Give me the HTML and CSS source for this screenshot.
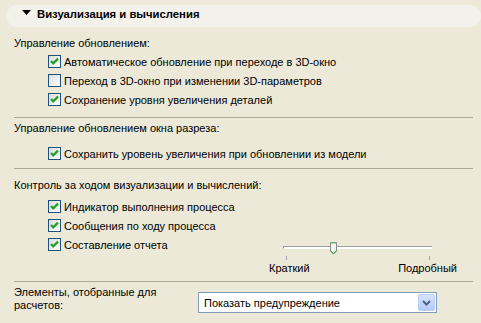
FILE: index.html
```html
<!DOCTYPE html>
<html lang="ru">
<head>
  <meta charset="UTF-8">
  <title>Визуализация и вычисления</title>
  <link rel="stylesheet" href="styles.css">
</head>
<body>

  <div class="header">
    <svg class="arrow" width="9" height="5" viewBox="0 0 9 5"><polygon points="0,0 9,0 4.5,5" fill="#000"/></svg>
    <span>Визуализация и вычисления</span>
  </div>

  <div class="section s1">
    <div class="title">Управление обновлением:</div>
    <div class="row"><span class="box"><svg width="11" height="11" viewBox="0 0 11 11"><path d="M2 5 L4.2 7.4 L9 2.6" fill="none" stroke="#21a121" stroke-width="2.2"/></svg></span><span class="txt">Автоматическое обновление при переходе в 3D-окно</span></div>
    <div class="row"><span class="box"></span><span class="txt">Переход в 3D-окно при изменении 3D-параметров</span></div>
    <div class="row"><span class="box"><svg width="11" height="11" viewBox="0 0 11 11"><path d="M2 5 L4.2 7.4 L9 2.6" fill="none" stroke="#21a121" stroke-width="2.2"/></svg></span><span class="txt">Сохранение уровня увеличения деталей</span></div>
  </div>

  <div class="section s2">
    <div class="title">Управление обновлением окна разреза:</div>
    <div class="row"><span class="box"><svg width="11" height="11" viewBox="0 0 11 11"><path d="M2 5 L4.2 7.4 L9 2.6" fill="none" stroke="#21a121" stroke-width="2.2"/></svg></span><span class="txt">Сохранить уровень увеличения при обновлении из модели</span></div>
  </div>

  <div class="section s3">
    <div class="title">Контроль за ходом визуализации и вычислений:</div>
    <div class="progress">
      <div class="checks">
        <div class="row"><span class="box"><svg width="11" height="11" viewBox="0 0 11 11"><path d="M2 5 L4.2 7.4 L9 2.6" fill="none" stroke="#21a121" stroke-width="2.2"/></svg></span><span class="txt">Индикатор выполнения процесса</span></div>
        <div class="row"><span class="box"><svg width="11" height="11" viewBox="0 0 11 11"><path d="M2 5 L4.2 7.4 L9 2.6" fill="none" stroke="#21a121" stroke-width="2.2"/></svg></span><span class="txt">Сообщения по ходу процесса</span></div>
        <div class="row"><span class="box"><svg width="11" height="11" viewBox="0 0 11 11"><path d="M2 5 L4.2 7.4 L9 2.6" fill="none" stroke="#21a121" stroke-width="2.2"/></svg></span><span class="txt">Составление отчета</span></div>
      </div>
      <div class="slider">
        <div class="rail">
          <div class="track"></div>
          <svg class="thumb" width="7" height="13" viewBox="0 0 7 13">
            <path d="M0.5 0.5 H6.5 V9 L3.5 12.2 L0.5 9 Z" fill="#f4f4f0" stroke="#8c8c8c"/>
            <path d="M1 1 H6" stroke="#5cc05c"/>
            <path d="M0.5 8.5 L3.5 11.8 L6.5 8.5" fill="none" stroke="#33a033"/>
          </svg>
        </div>
        <div class="ticks"><span></span><span></span></div>
        <div class="labels"><span>Краткий</span><span>Подробный</span></div>
      </div>
    </div>
  </div>

  <div class="section s4">
    <div class="label">Элементы, отобранные для расчетов:</div>
    <div class="combo">
      <span class="value">Показать предупреждение</span>
      <span class="drop"><svg width="9" height="6" viewBox="0 0 9 6"><path d="M1 1 L4.5 4.5 L8 1" fill="none" stroke="#4d6185" stroke-width="2"/></svg></span>
    </div>
  </div>

</body>
</html>
```

FILE: styles.css
```css
body {
  margin: 0;
  background-color: #ece9d8;
  font-family: "Liberation Sans", Arial, sans-serif;
  font-size: 11px;
  color: #000;
}

.header {
  margin: 5px 0 0 6px;
  height: 22px;
  border-radius: 11px;
  background-color: #f3f2ea;
  display: flex;
  align-items: flex-start;
}

.header .arrow {
  margin: 5px 0 0 16px;
}

.header span {
  margin: 3px 0 0 6px;
  font-weight: bold;
  font-size: 11.3px;
  line-height: 13px;
}

.section {
  margin: 0 8px 0 14px;
}

.s1 {
  padding-top: 10px;
  padding-bottom: 8px;
  border-bottom: 1px solid #aca899;
}

.s2 {
  padding-top: 4px;
  padding-bottom: 5px;
  border-bottom: 1px solid #aca899;
}

.s2 .title {
  margin-bottom: 9px;
}

.s3 {
  padding-top: 10px;
  padding-bottom: 6px;
  border-bottom: 1px solid #aca899;
}

.s3 .title {
  margin-bottom: 5px;
}

.s1 .title {
  margin-bottom: 2px;
}

.title, .label {
  line-height: 13px;
}

.row {
  height: 19px;
  display: flex;
  align-items: flex-start;
  padding-left: 34px;
}

.box {
  width: 11px;
  height: 11px;
  margin-top: 3px;
  border: 1px solid #1c5180;
  background: linear-gradient(135deg, #dcdcd7, #fff);
  display: flex;
}

.txt {
  margin: 4px 0 0 3px;
  line-height: 13px;
  white-space: nowrap;
}

.progress {
  display: flex;
  align-items: flex-start;
}

.slider {
  margin: 45px 16px 0 auto;
  width: 188px;
}

.rail {
  position: relative;
  height: 14px;
  margin: 0 25px 0 14px;
}

.track {
  position: relative;
  top: 4px;
  height: 1px;
  border-top: 1px solid #9d9d9d;
  border-bottom: 1px solid #fff;
  border-left: 1px solid #9d9d9d;
  background-color: #fff;
}

.thumb {
  position: absolute;
  left: 47px;
  top: 0;
}

.ticks {
  display: flex;
  justify-content: space-between;
  margin: 0 27px 0 17px;
  height: 4px;
}

.ticks span {
  width: 1px;
  height: 4px;
  background-color: #a8a8a8;
}

.labels {
  display: flex;
  justify-content: space-between;
  margin-top: 2px;
  line-height: 13px;
}

.s4 {
  padding-top: 4px;
  display: flex;
  align-items: flex-start;
}

.s4 .label {
  width: 150px;
  margin-right: 34px;
}

.combo {
  margin-top: 6px;
  width: 237px;
  height: 19px;
  border: 1px solid #7f9db9;
  background-color: #fff;
  display: flex;
  align-items: center;
}

.combo .value {
  flex: 1;
  padding-left: 5px;
}

.drop {
  width: 15px;
  height: 15px;
  margin-right: 1px;
  border: 1px solid #b9cdf5;
  border-radius: 2px;
  background: linear-gradient(#d6e3fc, #b5cbf9);
  display: flex;
  align-items: center;
  justify-content: center;
}
```
